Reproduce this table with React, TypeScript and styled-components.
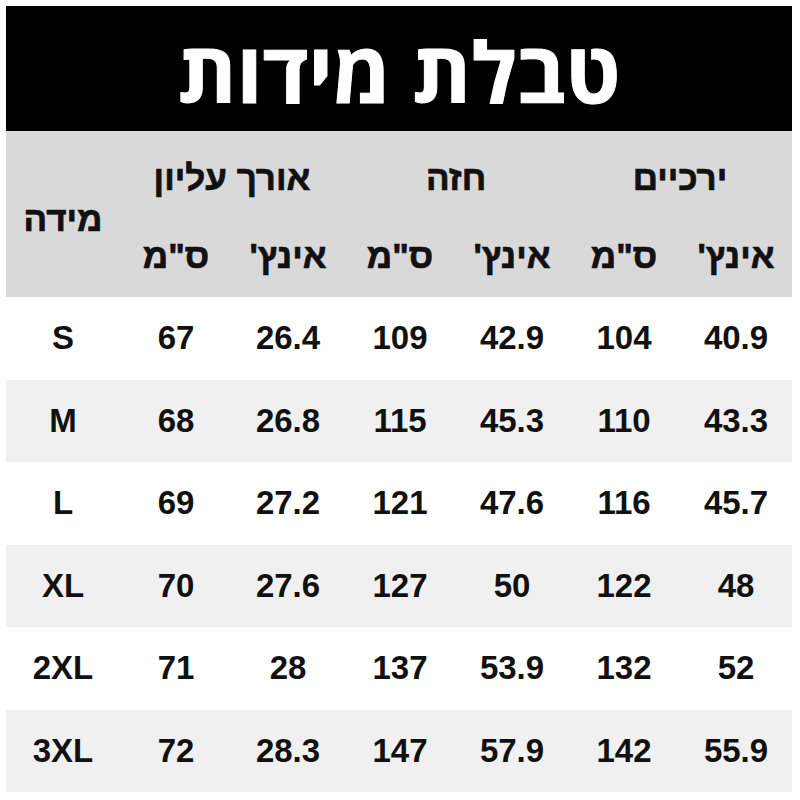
import * as React from 'react';
import styled, { createGlobalStyle } from 'styled-components';

const rows = [
  { size: 'S', len: ['67', '26.4'], chest: ['109', '42.9'], hips: ['104', '40.9'] },
  { size: 'M', len: ['68', '26.8'], chest: ['115', '45.3'], hips: ['110', '43.3'] },
  { size: 'L', len: ['69', '27.2'], chest: ['121', '47.6'], hips: ['116', '45.7'] },
  { size: 'XL', len: ['70', '27.6'], chest: ['127', '50'], hips: ['122', '48'] },
  { size: '2XL', len: ['71', '28'], chest: ['137', '53.9'], hips: ['132', '52'] },
  { size: '3XL', len: ['72', '28.3'], chest: ['147', '57.9'], hips: ['142', '55.9'] },
];

export default function App() {
  return (
    <>
      <GlobalStyle />
      <Page>
        <Sheet>
          <TitleBar>טבלת מידות</TitleBar>
          <Table dir="rtl">
            <colgroup>
              <col style={{ width: '112px' }} />
              <col style={{ width: '112px' }} />
              <col style={{ width: '112px' }} />
              <col style={{ width: '112px' }} />
              <col style={{ width: '112px' }} />
              <col style={{ width: '112px' }} />
              <col style={{ width: '114px' }} />
            </colgroup>
            <thead>
              <HeadRow $top>
                <HeadCell colSpan={2}>ירכיים</HeadCell>
                <HeadCell colSpan={2}>חזה</HeadCell>
                <HeadCell colSpan={2}>אורך עליון</HeadCell>
                <HeadCell rowSpan={2}>מידה</HeadCell>
              </HeadRow>
              <HeadRow>
                <HeadCell>אינץ'</HeadCell>
                <HeadCell>ס"מ</HeadCell>
                <HeadCell>אינץ'</HeadCell>
                <HeadCell>ס"מ</HeadCell>
                <HeadCell>אינץ'</HeadCell>
                <HeadCell>ס"מ</HeadCell>
              </HeadRow>
            </thead>
            <tbody>
              {rows.map((r, i) => (
                <BodyRow key={r.size} $shaded={i % 2 === 1}>
                  <Cell>{r.hips[1]}</Cell>
                  <Cell>{r.hips[0]}</Cell>
                  <Cell>{r.chest[1]}</Cell>
                  <Cell>{r.chest[0]}</Cell>
                  <Cell>{r.len[1]}</Cell>
                  <Cell>{r.len[0]}</Cell>
                  <Cell>{r.size}</Cell>
                </BodyRow>
              ))}
            </tbody>
          </Table>
        </Sheet>
      </Page>
    </>
  );
}

const GlobalStyle = createGlobalStyle`
  html, body {
    margin: 0;
    padding: 0;
    background: #ffffff;
  }
`;

const Page = styled.div`
  width: 800px;
  height: 800px;
  padding: 6px 8px 8px 6px;
  box-sizing: border-box;
  background: #ffffff;
`;

const Sheet = styled.div`
  width: 786px;
  display: flex;
  flex-direction: column;
`;

const TitleBar = styled.div`
  height: 125px;
  background: #000000;
  color: #ffffff;
  display: flex;
  align-items: center;
  justify-content: center;
  font-family: 'Open Sans', 'Liberation Sans', 'DejaVu Sans', sans-serif;
  font-weight: 700;
  font-size: 84px;
  line-height: 1;
  direction: rtl;
  padding-top: 4px;
  box-sizing: border-box;
  -webkit-text-stroke: 1px #ffffff;
`;

const Table = styled.table`
  width: 786px;
  table-layout: fixed;
  border-collapse: collapse;
  font-family: 'Liberation Sans', Arial, sans-serif;
  font-weight: 700;
  color: #111111;
`;

const HeadRow = styled.tr<{ $top?: boolean }>`
  background: #d9d9d9;
  height: 83px;
  th {
    padding-top: ${(p) => (p.$top ? '10px' : '0')};
  }
`;

const HeadCell = styled.th`
  padding: 0;
  text-align: center;
  vertical-align: middle;
  font-size: 35px;
  font-weight: 700;
  -webkit-text-stroke: 0.7px #111111;
`;

const BodyRow = styled.tr<{ $shaded: boolean }>`
  height: 82.5px;
  background: ${(p) => (p.$shaded ? '#f0f0f0' : '#ffffff')};
`;

const Cell = styled.td`
  padding: 0;
  text-align: center;
  vertical-align: middle;
  font-size: 33px;
`;
